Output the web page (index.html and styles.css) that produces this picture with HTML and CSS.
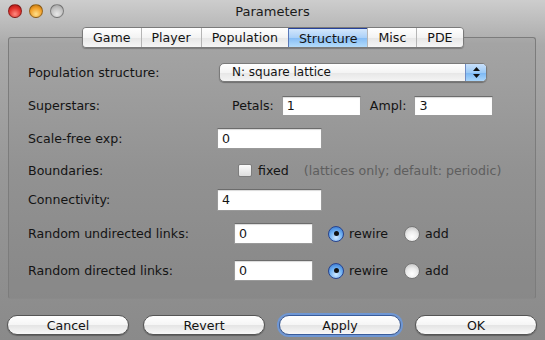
FILE: index.html
```html
<!DOCTYPE html>
<html lang="en">
<head>
    <meta charset="UTF-8">
    <title>Parameters</title>
    <link rel="stylesheet" href="styles.css">
</head>
<body>
    <div class="window">
        <div class="titlebar">
            <div class="lights">
                <span class="light red"></span>
                <span class="light yellow"></span>
                <span class="light gray"></span>
            </div>
            <div class="title">Parameters</div>
            <div></div>
        </div>

        <div class="tabs">
            <span class="tab">Game</span>
            <span class="tab">Player</span>
            <span class="tab">Population</span>
            <span class="tab selected">Structure</span>
            <span class="tab">Misc</span>
            <span class="tab">PDE</span>
        </div>

        <div class="panel">
            <div class="row">
                <span class="label">Population structure:</span>
                <div class="popup">
                    <span class="popup-text">N: square lattice</span>
                    <span class="popup-arrows">
                        <svg width="9" height="13" viewBox="0 0 9 13"><path d="M4.5 1 L8 5 H1 Z M4.5 12 L8 8 H1 Z" fill="#111"/></svg>
                    </span>
                </div>
            </div>
            <div class="row">
                <span class="label">Superstars:</span>
                <div class="group stars">
                    <span>Petals:</span>
                    <span class="field small">1</span>
                    <span class="ampl">Ampl:</span>
                    <span class="field small">3</span>
                </div>
            </div>
            <div class="row">
                <span class="label">Scale-free exp:</span>
                <span class="field wide">0</span>
            </div>
            <div class="row">
                <span class="label">Boundaries:</span>
                <div class="group bounds">
                    <span class="checkbox"></span>
                    <span>fixed</span>
                    <span class="hint">(lattices only; default: periodic)</span>
                </div>
            </div>
            <div class="row">
                <span class="label">Connectivity:</span>
                <span class="field wide tall">4</span>
            </div>
            <div class="row">
                <span class="label">Random undirected links:</span>
                <div class="group links">
                    <span class="field small">0</span>
                    <span class="radio on"></span><span class="opt">rewire</span>
                    <span class="radio add"></span><span class="opt">add</span>
                </div>
            </div>
            <div class="row">
                <span class="label">Random directed links:</span>
                <div class="group links">
                    <span class="field small">0</span>
                    <span class="radio on"></span><span class="opt">rewire</span>
                    <span class="radio add"></span><span class="opt">add</span>
                </div>
            </div>
        </div>

        <div class="buttons">
            <span class="button">Cancel</span>
            <span class="button">Revert</span>
            <span class="button focus">Apply</span>
            <span class="button">OK</span>
        </div>
    </div>
</body>
</html>
```

FILE: styles.css
```css
body {
    margin: 0;
    font-family: 'DejaVu Sans', sans-serif;
    font-size: 12.6px;
    color: #141414;
}
.window {
    width: 545px;
    height: 340px;
    background: linear-gradient(180deg, #cdcdcd 0px, #aaaaaa 45px, #989898 170px, #8a8a8a 340px);
    overflow: hidden;
}

/* title bar */
.titlebar {
    height: 22px;
    display: grid;
    grid-template-columns: 1fr auto 1fr;
    align-items: center;
}
.lights {
    display: flex;
    gap: 7px;
    padding-left: 8px;
}
.light {
    width: 14px;
    height: 14px;
    border-radius: 50%;
    box-sizing: border-box;
    border: 1px solid rgba(0, 0, 0, 0.35);
}
.red {
    background: radial-gradient(circle at 50% 75%, #ff8a80 0%, #e0302a 55%, #a01010 100%);
}
.yellow {
    background: radial-gradient(circle at 50% 75%, #ffe08a 0%, #f2a12a 55%, #b06a08 100%);
}
.gray {
    background: radial-gradient(circle at 50% 75%, #e8e8e8 0%, #c2c2c2 55%, #9a9a9a 100%);
}
.title {
    font-size: 13px;
    color: #1a1a1a;
}

/* tabs */
.tabs {
    display: flex;
    width: max-content;
    margin: 5px 0 -11px 82px;
    height: 21px;
    position: relative;
    z-index: 1;
    border: 1px solid #7a7a7a;
    border-radius: 4px;
    overflow: hidden;
    box-shadow: 0 1px 1px rgba(0, 0, 0, 0.25);
    box-sizing: border-box;
}
.tab {
    display: flex;
    align-items: center;
    justify-content: center;
    padding: 0 10px;
    background: linear-gradient(#ffffff, #f3f3f3 50%, #e6e6e6 51%, #f6f6f6);
    border-left: 1px solid #b5b5b5;
}
.tab:first-child {
    border-left: none;
}
.tab.selected {
    background: linear-gradient(#d3e6fb, #a9d0f8 50%, #86bdf5 51%, #b4dcfb);
    border-top: 1px solid #26419a;
    border-left-color: #5a78b8;
}

/* panel */
.panel {
    margin: 0 9px 0 8px;
    height: 262px;
    box-sizing: border-box;
    border: 1px solid #7c7c7c;
    border-bottom-color: #8a8a8a;
    border-radius: 3px;
    background: rgba(0, 0, 0, 0.035);
    padding: 24px 0 0 19px;
    display: grid;
    grid-template-rows: 33px 33px 32px 29px 34px 37px 22px;
    align-items: start;
}
.row {
    display: flex;
    align-items: center;
    height: 21px;
}
.label {
    width: 189px;
    flex: none;
}
.group {
    display: flex;
    align-items: center;
}

.popup {
    margin-left: 2px;
    width: 268px;
    height: 19px;
    display: flex;
    border: 1px solid #7a7a7a;
    border-radius: 5px;
    overflow: hidden;
    box-sizing: border-box;
    background: linear-gradient(#ffffff, #f4f4f4 50%, #e6e6e6 51%, #f4f4f4);
    box-shadow: 0 1px 1px rgba(0, 0, 0, 0.3);
    font-size: 12px;
}
.popup-text {
    flex: 1;
    padding-left: 12px;
    line-height: 17px;
}
.popup-arrows {
    width: 20px;
    display: flex;
    align-items: center;
    justify-content: center;
    background: linear-gradient(#c8e0fb, #9ccaf6 50%, #79b6f3 51%, #aad6fb);
    border-left: 1px solid #6f8cc4;
}

.field {
    display: flex;
    align-items: center;
    height: 20px;
    box-sizing: border-box;
    background: #fff;
    border: 1px solid #9a9a9a;
    border-top-color: #6c6c6c;
    padding-left: 4px;
    box-shadow: inset 0 1px 1px rgba(0, 0, 0, 0.15);
}
.field.small {
    width: 79px;
}
.field.wide {
    width: 105px;
    height: 21px;
}
.field.tall {
    height: 22px;
}

.stars {
    margin-left: 15px;
    gap: 8px;
}
.stars .ampl {
    margin-left: 1px;
}

.bounds {
    margin-left: 21px;
}
.checkbox {
    width: 14px;
    height: 13px;
    box-sizing: border-box;
    border: 1px solid #7d7d7d;
    border-radius: 2px;
    background: linear-gradient(#fafafa, #dedede);
    margin-right: 6px;
}
.hint {
    margin-left: 15px;
    color: #5e5e5e;
}

.links {
    margin-left: 17px;
    height: 21px;
}
.links .field {
    height: 21px;
}
.radio {
    width: 16px;
    height: 16px;
    border-radius: 50%;
    box-sizing: border-box;
    margin-left: 15px;
    margin-right: 5px;
    border: 1px solid #777;
    background: radial-gradient(circle at 50% 70%, #ffffff 0%, #ececec 45%, #b8b8b8 100%);
    position: relative;
}
.radio.on {
    border-color: #27438f;
    background: radial-gradient(circle at 50% 75%, #cfe8ff 0%, #6fb0f2 50%, #2a6cc8 100%);
}
.radio.on::after {
    content: "";
    position: absolute;
    width: 5px;
    height: 5px;
    border-radius: 50%;
    background: #111;
    left: 4.5px;
    top: 4.5px;
}
.radio.add {
    margin-left: 16px;
}

/* bottom buttons */
.buttons {
    display: flex;
    gap: 14px;
    padding: 16px 0 0 7px;
}
.button {
    width: 122px;
    height: 20px;
    box-sizing: border-box;
    display: flex;
    align-items: center;
    justify-content: center;
    border: 1px solid #555;
    border-radius: 10px;
    background: linear-gradient(#ffffff, #f5f5f5 50%, #e4e4e4 51%, #f8f8f8);
    box-shadow: 0 1px 1px rgba(0, 0, 0, 0.3);
}
.button.focus {
    border-color: #3a5c9a;
    box-shadow: 0 0 0 2px #6f97d4, 0 1px 1px rgba(0, 0, 0, 0.3);
}
```
